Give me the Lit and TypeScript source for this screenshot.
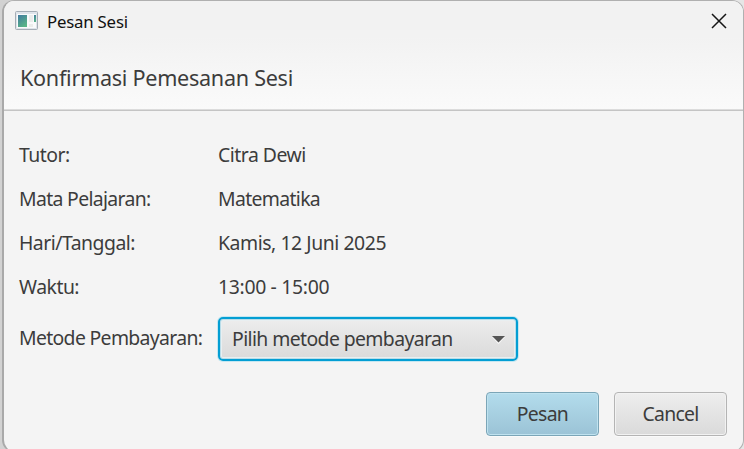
import { LitElement, html, css } from "lit";
import { customElement } from "lit/decorators.js";

interface Row {
  label: string;
  value: string;
  labelClass: string;
  valueClass: string;
}

const rows: Row[] = [
  { label: "Tutor:", value: "Citra Dewi", labelClass: "tutor", valueClass: "name" },
  { label: "Mata Pelajaran:", value: "Matematika", labelClass: "subject", valueClass: "course" },
  { label: "Hari/Tanggal:", value: "Kamis, 12 Juni 2025", labelClass: "day", valueClass: "date" },
  { label: "Waktu:", value: "13:00 - 15:00", labelClass: "time", valueClass: "hours" },
];

@customElement("app-root")
export class AppRoot extends LitElement {
  static styles = css`
    :host {
      display: block;
      box-sizing: border-box;
      height: 449px;
      overflow: hidden;
      padding-left: 2px;
      background: linear-gradient(to right, #d2d2d2 0 10px, #e6e6e6 40px);
      font-family: "Noto Sans", "Open Sans", sans-serif;
      color: #3c3c3c;
      font-size: 19.4px;
      font-weight: 400;
      white-space: nowrap;
    }
    .window {
      box-sizing: border-box;
      height: 452px;
      border: 1px solid #b0b0b0;
      border-left: 2px solid #a9a9a9;
      border-radius: 12px;
      background: #f4f4f4;
      overflow: hidden;
      display: flex;
      flex-direction: column;
    }
    .head {
      box-sizing: border-box;
      height: 110px;
      flex: none;
      background: linear-gradient(#f2f2f2 0, #f2f2f2 36px, #fafafa 108px);
      border-bottom: 1px solid #c4c4c4;
      box-shadow: inset 0 -1px 0 #dcdcdc;
    }
    .titlebar {
      display: flex;
      align-items: center;
      height: 40px;
      padding: 0 16px 0 11px;
    }
    .appicon {
      width: 24px;
      height: 20px;
      display: block;
    }
    .title {
      margin-left: 8px;
      color: #111;
      font-size: 16.8px;
      letter-spacing: -0.2px;
      flex: 1;
    }
    .close {
      display: block;
      width: 16px;
      height: 16px;
    }
    .heading {
      font-size: 21.6px;
      line-height: 30px;
      letter-spacing: -0.28px;
      padding: 22px 0 0 16px;
    }
    .form {
      display: grid;
      grid-template-columns: 199px 300px;
      grid-template-rows: repeat(4, 44px) 58px;
      align-items: center;
      padding: 21px 0 0 15px;
    }
    .form span {
      letter-spacing: -0.5px;
    }
    .form .subject,
    .form .course,
    .form .method {
      letter-spacing: -0.66px;
    }
    .form .choice {
      letter-spacing: -0.6px;
    }
    .form .date {
      letter-spacing: -0.44px;
    }
    .form .hours {
      letter-spacing: -0.33px;
    }
    .combo {
      box-sizing: border-box;
      width: 300px;
      height: 44px;
      margin-top: 3px;
      display: flex;
      align-items: center;
      justify-content: space-between;
      padding: 0 11px 0 12px;
      border: 2px solid #039ed3;
      border-radius: 5px;
      background: linear-gradient(#ededed, #dadada);
      box-shadow: 0 0 0 1px #c5e7f1, inset 0 0 0 1px #b9dce8, inset 0 0 0 2px #e9eff1;
    }
    .arrow {
      width: 13px;
      height: 9px;
      display: block;
      margin-top: 1px;
    }
    .actions {
      display: flex;
      justify-content: flex-end;
      gap: 15px;
      padding: 26px 16px 0 0;
    }
    .button {
      box-sizing: border-box;
      width: 113px;
      height: 44px;
      padding-bottom: 1px;
      display: flex;
      align-items: center;
      justify-content: center;
      border: 1px solid #b4b4b4;
      border-radius: 4px;
      background: linear-gradient(#eeeeee, #dadada);
      box-shadow: inset 0 0 0 1px #f2f2f2, 0 1px 0 #fafafa;
      letter-spacing: -0.7px;
    }
    .primary {
      border-color: #7ba5b7;
      background: linear-gradient(#b3dcec, #9bc3d6);
      box-shadow: inset 0 0 0 1px #bfe2ef, 0 1px 0 #fafafa;
    }
  `;

  render() {
    return html`
      <div class="window">
        <div class="head">
          <div class="titlebar">
            <svg class="appicon" viewBox="0 0 24 20">
              <defs>
                <linearGradient id="pane" x1="0" y1="0" x2="0.6" y2="1">
                  <stop offset="0" stop-color="#4079a0" />
                  <stop offset="1" stop-color="#58b487" />
                </linearGradient>
              </defs>
              <rect x="0.5" y="0.5" width="22" height="18" rx="1" fill="#dfe4ea" stroke="#a5adb6" />
              <rect x="2" y="3" width="19" height="14" fill="#f9fafb" />
              <rect x="3" y="4" width="9" height="12" fill="url(#pane)" />
              <rect x="14" y="4" width="4" height="7" fill="#ebeceb" />
              <rect x="19" y="4" width="2" height="7" fill="url(#pane)" />
              <rect x="14" y="13" width="4" height="3" fill="#ebeceb" />
            </svg>
            <span class="title">Pesan Sesi</span>
            <svg class="close" viewBox="0 0 16 16">
              <path d="M1 1L15 15M15 1L1 15" fill="none" stroke="#161616" stroke-width="1.5" />
            </svg>
          </div>
          <div class="heading">Konfirmasi Pemesanan Sesi</div>
        </div>
        <div class="form">
          ${rows.map(
            (r) => html`<span class=${r.labelClass}>${r.label}</span><span class=${r.valueClass}>${r.value}</span>`
          )}
          <span class="method">Metode Pembayaran:</span>
          <div class="combo">
            <span class="choice">Pilih metode pembayaran</span>
            <svg class="arrow" viewBox="0 0 13 9">
              <path d="M0 2H13L6.500 9Z" fill="#fafafa" />
              <path d="M0 1H13L6.500 7.500Z" fill="#555" />
            </svg>
          </div>
        </div>
        <div class="actions">
          <div class="button primary">Pesan</div>
          <div class="button">Cancel</div>
        </div>
      </div>
    `;
  }
}
